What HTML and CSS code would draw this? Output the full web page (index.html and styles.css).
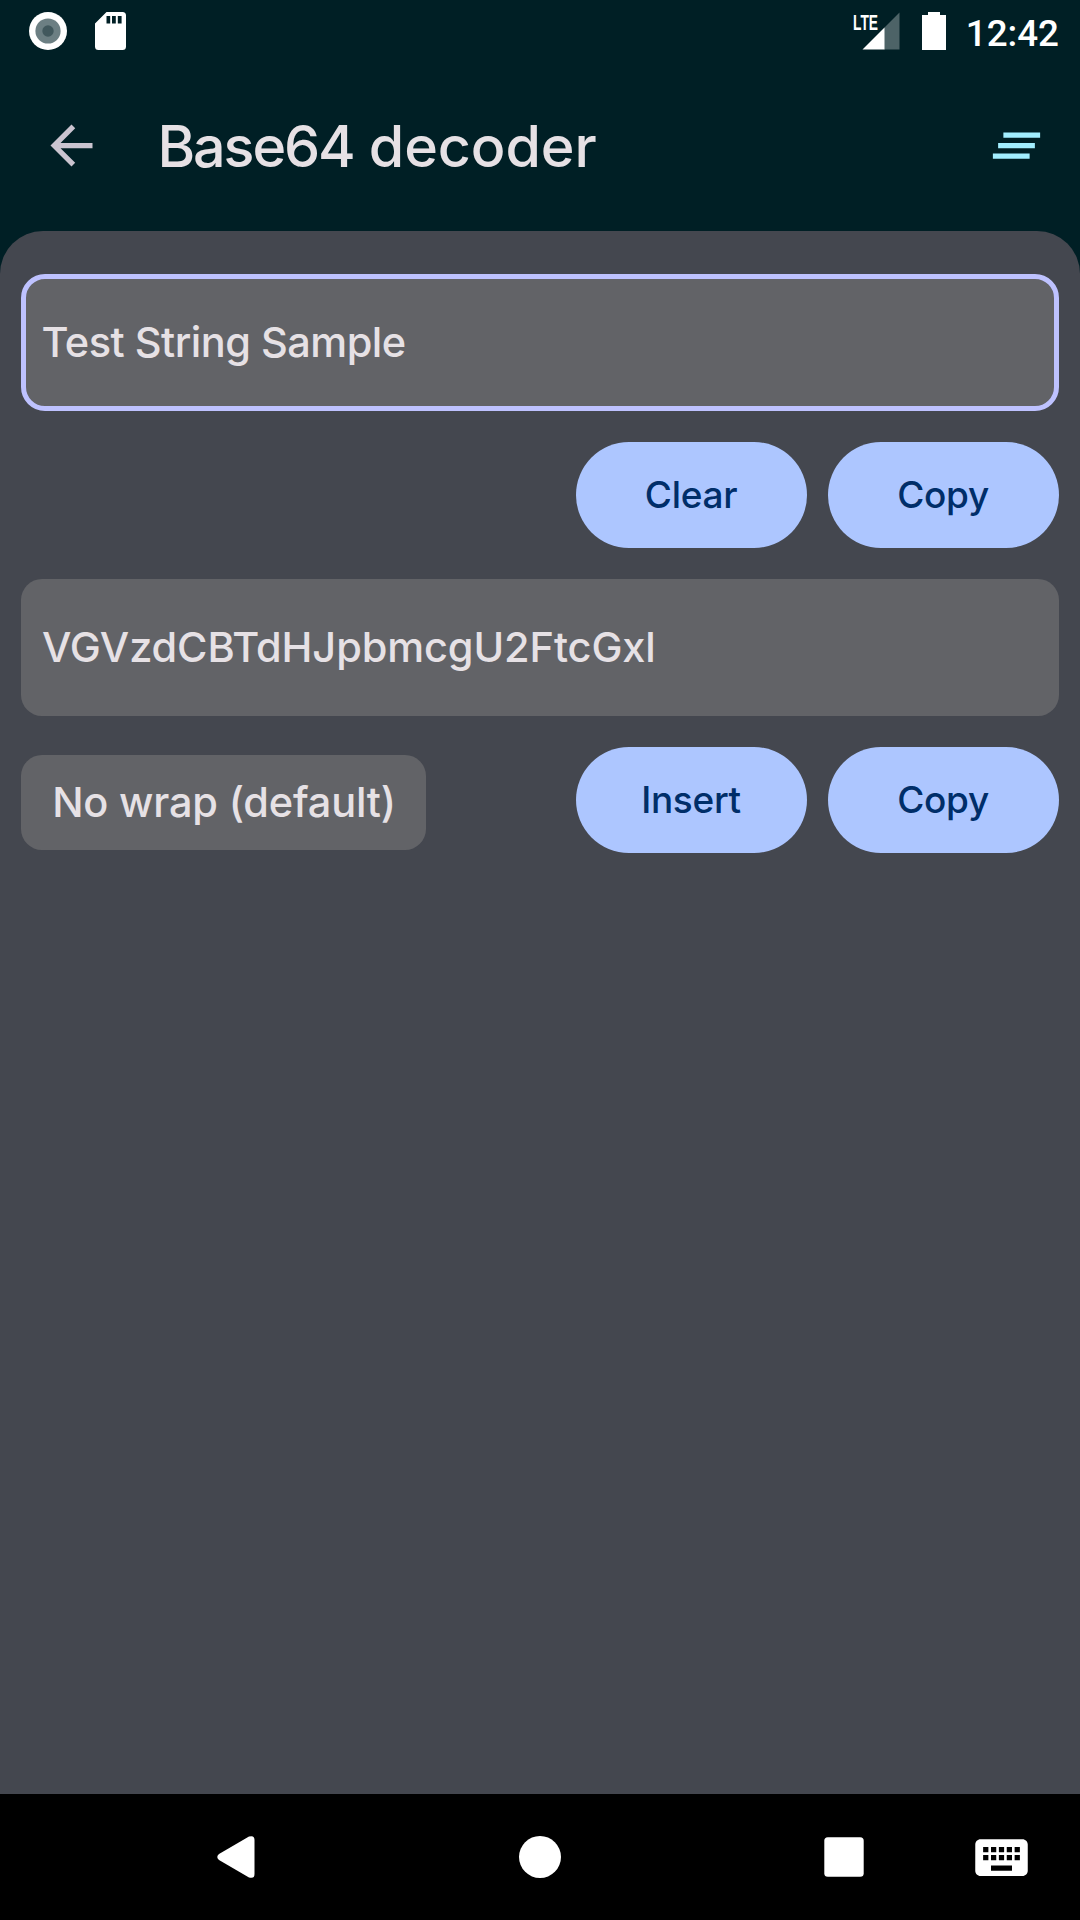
FILE: index.html
```html
<!DOCTYPE html>
<html lang="en">
<head>
<meta charset="utf-8">
<title>Base64 decoder</title>
<link rel="stylesheet" href="styles.css">
</head>
<body>
<div class="screen">
  <div class="status">
    <div class="status-left">
      <svg width="38" height="38" viewBox="0 0 38 38"><circle cx="19" cy="19" r="19" fill="#fff"/><circle cx="19" cy="19" r="12.6" fill="#6c7f83"/><circle cx="19" cy="19" r="5.7" fill="#41585d"/></svg>
      <svg width="31" height="38" viewBox="0 0 31 38"><path fill="#fff" fill-rule="evenodd" d="M11.5 0H27.5Q31 0 31 3.5V34.5Q31 38 27.5 38H3.5Q0 38 0 34.5V11.5ZM11.5 4V11.5H15.2V4ZM17 4V11.5H20.8V4ZM22.8 4V11.5H26.6V4Z"/></svg>
    </div>
    <div class="status-right">
      <svg class="signal" width="47" height="38" viewBox="0 0 47 38"><path fill="#4d6367" d="M46.500 .500V37.500H31V16Z"/><path fill="#fff" d="M9.500 37.500L31.500 15.500V37.500Z"/><text class="lte" x="0" y="17.500" textLength="25" lengthAdjust="spacingAndGlyphs">LTE</text></svg>
      <svg class="battery" width="24" height="38" viewBox="0 0 24 38"><path fill="#fff" d="M6 0H18V3H24V38H0V3H6Z"/></svg>
      <span class="clock">12:42</span>
    </div>
  </div>
  <header class="bar">
    <svg class="back" width="63" height="63" viewBox="0 0 24 24"><path d="M20 11H7.830l5.590-5.590L12 4l-8 8 8 8 1.410-1.410L7.830 13H20v-2z"/></svg>
    <h1 class="title"><span class="title-lead">Base64</span> decoder</h1>
    <svg class="clear-all" width="63" height="63" viewBox="0 0 24 24"><path d="M5 13h14v-2H5v2zm-2 4h14v-2H3v2zM7 7v2h14V7H7z"/></svg>
  </header>
  <main class="panel">
    <div class="field focused"><span class="t-input">Test String Sample</span></div>
    <div class="actions">
      <button class="btn"><span>Clear</span></button>
      <button class="btn"><span>Copy</span></button>
    </div>
    <div class="field"><span class="t-output">VGVzdCBTdHJpbmcgU2FtcGxl</span></div>
    <div class="actions">
      <div class="chip"><span>No wrap (default)</span></div>
      <button class="btn"><span>Insert</span></button>
      <button class="btn"><span>Copy</span></button>
    </div>
  </main>
  <nav class="nav">
    <svg width="38" height="42" viewBox="0 0 38 42"><path fill="#fff" d="M32 .600Q37.500-1.200 37.500 4V38Q37.500 43.200 32 41.400L2 24Q-1.500 21 2 18Z"/></svg>
    <svg width="42" height="42" viewBox="0 0 42 42"><circle cx="21" cy="21" r="21" fill="#fff"/></svg>
    <svg width="40" height="40" viewBox="0 0 40 40"><rect x=".3" y=".3" width="39.400" height="39.400" rx="3.500" fill="#fff"/></svg>
    <svg width="63" height="63" viewBox="0 0 24 24"><path fill="#fff" d="M20 5H4c-1.100 0-1.990.9-1.990 2L2 17c0 1.100.9 2 2 2h16c1.100 0 2-.9 2-2V7c0-1.100-.9-2-2-2zm-9 3h2v2h-2V8zm0 3h2v2h-2v-2zM8 8h2v2H8V8zm0 3h2v2H8v-2zm-1 2H5v-2h2v2zm0-3H5V8h2v2zm9 7H8v-2h8v2zm0-4h-2v-2h2v2zm0-3h-2V8h2v2zm3 3h-2v-2h2v2zm0-3h-2V8h2v2z"/></svg>
  </nav>
</div>
</body>
</html>
```
FILE: styles.css
```css
* { box-sizing: border-box; }
body { margin: 0; background: #001f25; font-family: Inter, "Liberation Sans", sans-serif; font-weight: 550; color: #e6e1e5; }
.screen { width: 1080px; height: 1920px; display: flex; flex-direction: column; overflow: hidden; }
svg { display: block; flex: none; overflow: visible; }
span, h1 { white-space: nowrap; }

.status { height: 63px; display: flex; justify-content: space-between; align-items: center; padding: 0 21px 0 28.500px; }
.status-left { display: flex; gap: 28.500px; padding-bottom: 1px; }
.status-right { display: flex; align-items: center; }
.signal, .battery { margin-bottom: 1px; }
.battery { margin-left: 22px; margin-right: 20px; }
.lte { font-family: "Liberation Sans", sans-serif; font-weight: 700; font-size: 22.500px; fill: #fff; }
.clock { font-family: Roboto, sans-serif; font-weight: 500; font-size: 36.750px; line-height: 61px; color: #fff; padding-top: 3px; }

.bar { height: 168px; display: flex; align-items: center; padding: 0 32.500px 3px 39.500px; }
.back { fill: #cac4d0; }
.title { margin: 0 auto 0 55px; font-size: 57.400px; font-weight: 550; line-height: 70px; letter-spacing: -.1px; }
.title-lead { letter-spacing: -2.1px; }
.clear-all { fill: #a2eeff; }

.panel { flex: 1; background: #44474f; border-radius: 43px 43px 0 0; padding: 43px 21px 0; }
.field { height: 137px; border-radius: 21px; background: #626367; display: flex; align-items: center; padding: 0 0 1px 21px; font-size: 41.500px; }
.focused { border: 5px solid #bec2ff; border-radius: 24px; padding-left: 15.500px; }
.t-input { letter-spacing: -.5px; }
.t-output { letter-spacing: -.1px; }
.actions { display: flex; justify-content: flex-end; gap: 21px; margin: 31px 0; height: 106px; }
.btn { width: 231px; height: 106px; border: 0; border-radius: 53px; background: #adc6ff; color: #002e69; font: inherit; font-size: 37px; letter-spacing: -.3px; padding: 0 1px 1px 0; }
.chip { width: 405px; height: 95px; margin: 8px auto 0 0; border-radius: 21px; background: #626367; display: flex; align-items: center; justify-content: center; font-size: 41.500px; letter-spacing: -.2px; padding: 0 0 1px 1px; }

.nav { height: 126px; background: #000; display: flex; align-items: center; padding-left: 217px; }
.nav svg:nth-child(2) { margin-left: 264px; }
.nav svg:nth-child(3) { margin-left: 263px; }
.nav svg:nth-child(4) { margin-left: 106px; }
```
